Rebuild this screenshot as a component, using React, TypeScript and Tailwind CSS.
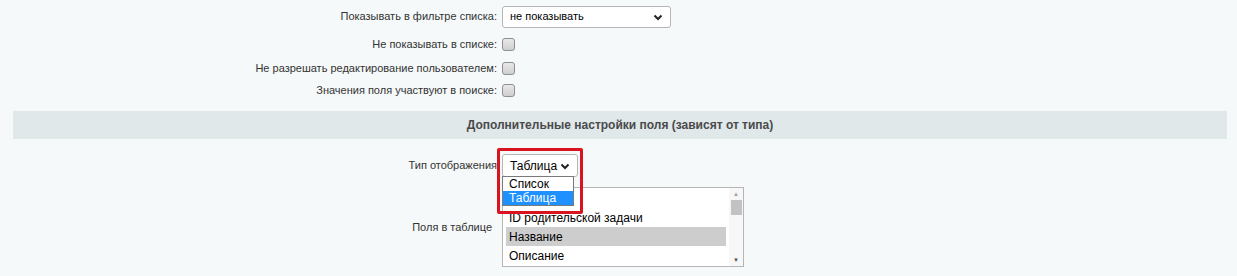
import React from "react";

const Chevron = ({ className }: { className?: string }) => (
  <svg viewBox="0 0 10 10" className={className} fill="none" stroke="currentColor" strokeWidth={2}>
    <path d="M1.5 3.5 L5 7 L8.5 3.5" />
  </svg>
);

const Checkbox = () => (
  <span className="inline-block w-[13px] h-[13px] rounded-[3px] border border-[#8f8f8f] bg-gradient-to-b from-[#e8e8e8] to-[#cfcfcf]" />
);

const Row = ({ label, h, children }: { label: string; h: string; children: React.ReactNode }) => (
  <div className={`flex items-center ${h}`}>
    <div className="w-[489px] text-right pr-[5px] text-[#333]">{label}</div>
    <div className="flex items-center">{children}</div>
  </div>
);

// first option sits under the open dropdown, so it shows no text
const listItems = ["", "ID родительской задачи", "Название", "Описание"];

const App = () => {
  return (
    <div
      className="w-[1237px] h-[276px] bg-[#f5f9f9] text-[11px] pl-[13px] pr-[10px] overflow-hidden"
      style={{ fontFamily: '"Liberation Sans", Arial, sans-serif' }}
    >
      <div className="pt-[5px]">
        <Row label="Показывать в фильтре списка:" h="h-[23px]">
          <div className="w-[169px] h-[22px] flex items-center justify-between rounded-[3px] border border-[#b5b5b5] bg-white pl-[7px] pr-[7px] text-black">
            <span>не показывать</span>
            <Chevron className="w-[10px] h-[10px] text-[#222]" />
          </div>
        </Row>
        <Row label="Не показывать в списке:" h="h-[28px] pt-[4px]">
          <Checkbox />
        </Row>
        <Row label="Не разрешать редактирование пользователем:" h="h-[24px]">
          <Checkbox />
        </Row>
        <Row label="Значения поля участвуют в поиске:" h="h-[20px]">
          <Checkbox />
        </Row>
      </div>

      <div className="mt-[11px] h-[28px] bg-[#e0e8ea] flex items-center justify-center font-bold text-[12px] text-[#4a4a4a]">
        Дополнительные настройки поля (зависят от типа)
      </div>

      <div className="relative pt-[15px]">
        <div className="flex items-center h-[23px]">
          <div className="w-[489px] text-right pr-[5px] text-[#333]">Тип отображения</div>
          <div className="w-[76px] h-[23px] flex items-center justify-between rounded-[3px] border border-[#b5b5b5] bg-white pl-[7px] pr-[7px] text-[12px] text-black">
            <span>Таблица</span>
            <Chevron className="w-[10px] h-[10px] text-[#222]" />
          </div>
        </div>

        <div className="flex items-center mt-[10px]">
          <div className="w-[484px] text-right pr-[5px] text-[#333] mr-[5px]">Поля в таблице</div>
          <div className="w-[242px] h-[80px] border border-[#b5b5b5] bg-white flex text-[12px] text-black">
            <div className="flex-1 pt-[1px] pl-[3px]">
              {listItems.map((item, i) => (
                <div
                  key={i}
                  className={`h-[19px] flex items-center pl-[3px] ${item === "Название" ? "bg-[#cdcdcd]" : ""}`}
                >
                  {item}
                </div>
              ))}
            </div>
            <div className="w-[14px] ml-[3px] flex flex-col items-center bg-[#f7f7f7]">
              <span className="h-[12px] text-[6px] leading-[12px] text-[#a0a0a0]">▲</span>
              <span className="w-[11px] h-[15px] bg-[#c2c2c2]" />
              <span className="flex-1" />
              <span className="h-[12px] text-[6px] leading-[12px] text-[#505050]">▼</span>
            </div>
          </div>
        </div>

        <div className="absolute left-[489px] top-[37px] w-[72px] bg-white border border-[#7a7a7a] text-[12px] text-black">
          <div className="h-[14px] flex items-center pl-[6px]">Список</div>
          <div className="h-[14px] flex items-center pl-[6px] bg-[#1e90ff] text-white">Таблица</div>
        </div>

        <div className="absolute left-[484px] top-[9px] w-[86px] h-[66px] border-[3px] border-[#d9141e] rounded-[2px]" />
      </div>
    </div>
  );
};

export default App;
